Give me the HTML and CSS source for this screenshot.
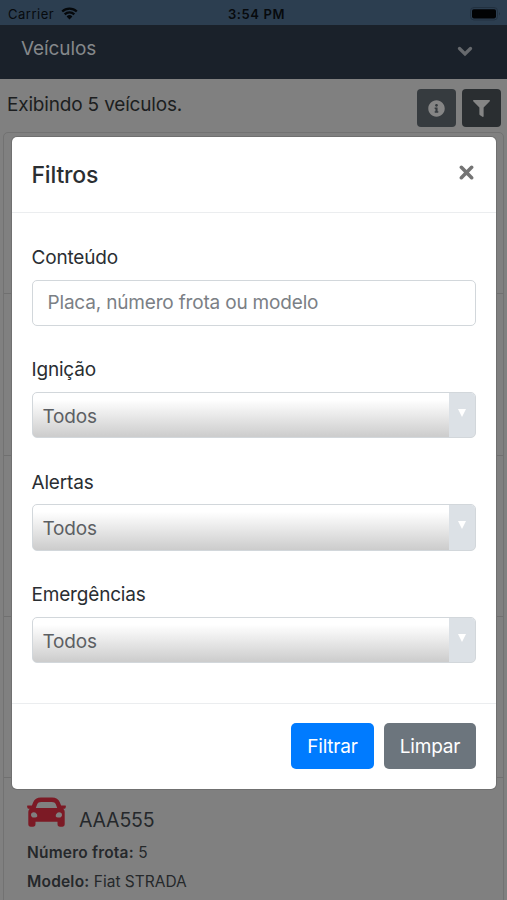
FILE: index.html
```html
<!DOCTYPE html>
<html lang="pt-BR">
<head>
<meta charset="utf-8">
<title>Veículos</title>
<link rel="stylesheet" href="styles.css">
</head>
<body>
<div class="app">
  <div class="status">
    <div class="carrier"><span class="carrier-name">Carrier</span>
      <svg class="wifi" viewBox="0 0 17 13"><path d="M1.2 4.5a10.6 10.6 0 0 1 14.6 0M3.7 7.3a6.9 6.9 0 0 1 9.6 0" fill="none" stroke="#05080b" stroke-width="2.3"/><path d="M5.6 9.4a4.2 4.2 0 0 1 5.8 0L8.500 12.500z" fill="#05080b"/></svg>
    </div>
    <div class="clock">3:54 PM</div>
    <div class="power">
      <svg class="battery" viewBox="0 0 31 14"><rect x=".5" y=".5" width="27" height="12.500" rx="3.500" fill="none" stroke="#223140"/><rect x="2" y="2.200" width="24" height="9.200" rx="1.800" fill="#020304"/><path d="M29 5q1.500 1.700 0 3.500z" fill="#1c2935"/></svg>
    </div>
  </div>
  <header class="navbar">
    <span class="brand">Veículos</span>
    <svg class="chevron" viewBox="0 0 16 11"><path d="M2.500 2.500 8 8l5.500-5.500" fill="none" stroke="#66696d" stroke-width="3.300" stroke-linecap="round"/></svg>
  </header>
  <div class="toolbar">
    <span class="summary">Exibindo 5 veículos.</span>
    <span class="tool"><svg class="tool-icon" viewBox="0 0 512 512"><path d="M256 8C119.043 8 8 119.083 8 256c0 136.997 111.043 248 248 248s248-111.003 248-248C504 119.083 392.957 8 256 8zm0 110c23.196 0 42 18.804 42 42s-18.804 42-42 42-42-18.804-42-42 18.804-42 42-42zm56 254c0 6.627-5.373 12-12 12h-88c-6.627 0-12-5.373-12-12v-24c0-6.627 5.373-12 12-12h12v-64h-12c-6.627 0-12-5.373-12-12v-24c0-6.627 5.373-12 12-12h64c6.627 0 12 5.373 12 12v100h12c6.627 0 12 5.373 12 12v24z"/></svg></span>
    <span class="tool tool-active"><svg class="tool-icon" viewBox="0 0 512 512"><path d="M487.976 0H24.028C2.710 0-8.047 25.866 7.058 40.971L192 225.941V432c0 7.831 3.821 15.170 10.237 19.662l80 55.980C298.020 518.690 320 507.493 320 487.980V225.941l184.947-184.970C520.021 25.896 509.338 0 487.976 0z"/></svg></span>
  </div>
  <div class="list">
    <div class="item"></div>
    <div class="item"></div>
    <div class="item"></div>
    <div class="item"></div>
    <div class="item">
      <div class="plate">
        <svg class="car" viewBox="0 0 39 30"><path fill-rule="evenodd" d="M14 .5h11c4 0 6.600 1.800 7.800 4.800l1.300 3.200h3.900c.7 0 1 .4.900 1l-.4 1.500c-.1.500-.5.700-1 .7h-1.300c1 .9 1.500 2.200 1.500 3.600V27c0 1.800-.9 2.700-2.500 2.700h-2.200c-1.600 0-2.500-.9-2.500-2.700v-2.300h-22V27c0 1.800-.9 2.700-2.500 2.700H3.800c-1.600 0-2.500-.9-2.500-2.700V15.300c0-1.400.5-2.700 1.500-3.600H1.500c-.5 0-.9-.2-1-.7L.1 9.500c-.1-.6.200-1 .9-1h3.900l1.300-3.200C7.400 2.300 10 .5 14 .5zM14.200 5c-2.200 0-3.300.7-4 2.300L8.800 11h21.400l-1.400-3.700C28.100 5.700 27 5 24.800 5zM6.800 15.300c-1.700 0-2.800 1.100-2.800 2.600s1.100 2.600 2.800 2.600c2 0 3.500-.4 3.500-1.600 0-1.600-1.500-3.600-3.500-3.600zm25.400 0c-2 0-3.500 2-3.500 3.600 0 1.200 1.500 1.600 3.500 1.600 1.700 0 2.800-1.100 2.800-2.600s-1.100-2.600-2.800-2.600z"/></svg>
        <span class="plate-number">AAA555</span>
      </div>
      <div class="detail"><b>Número frota:</b> 5</div>
      <div class="detail"><b>Modelo:</b> Fiat STRADA</div>
    </div>
  </div>
</div>
<div class="modal">
  <div class="modal-header">
    <span class="modal-title">Filtros</span>
    <svg class="close" viewBox="0 0 14 14"><path d="M2.200 2.200l9.600 9.600M11.800 2.200l-9.600 9.600" stroke="#747474" stroke-width="3.300" stroke-linecap="round"/></svg>
  </div>
  <div class="modal-body">
    <div class="group"><label class="label">Conteúdo</label><input class="input" placeholder="Placa, número frota ou modelo"></div>
    <div class="group"><label class="label">Ignição</label><div class="select"><span class="value">Todos</span><span class="handle"><i class="arrow"></i></span></div></div>
    <div class="group"><label class="label">Alertas</label><div class="select"><span class="value">Todos</span><span class="handle"><i class="arrow"></i></span></div></div>
    <div class="group"><label class="label">Emergências</label><div class="select"><span class="value">Todos</span><span class="handle"><i class="arrow"></i></span></div></div>
  </div>
  <div class="modal-footer">
    <button class="btn btn-primary">Filtrar</button>
    <button class="btn btn-secondary">Limpar</button>
  </div>
</div>
</body>
</html>
```
FILE: styles.css
```css
* { box-sizing: border-box; }
body {
  margin: 0;
  font-family: Inter, "Liberation Sans", sans-serif;
  font-size: 19px;
  letter-spacing: -0.18px;
  color: #2a2e32;
}
svg { display: block; flex: none; }
.app { height: 900px; overflow: hidden; background: #808080; }
.status {
  display: grid;
  grid-template-columns: 1fr auto 1fr;
  align-items: center;
  height: 25px;
  padding: 2px 6px 0 8px;
  background: #2c3e50;
  color: #070a0d;
  font-size: 13px;
}
.carrier { display: flex; align-items: center; gap: 7px; }
.carrier-name { letter-spacing: 0.5px; }
.wifi { width: 17px; height: 13px; }
.clock { padding-left: 4px; font-weight: 600; letter-spacing: 0.6px; }
.power { display: flex; justify-content: flex-end; }
.battery { width: 31px; height: 14px; }
.navbar {
  display: flex;
  justify-content: space-between;
  align-items: flex-start;
  height: 54px;
  padding: 11px 34px 0 21px;
  background: #1a212a;
  color: #85888b;
}
.brand { line-height: 26px; letter-spacing: -0.1px; }
.chevron { width: 16px; height: 11px; margin-top: 10px; }
.toolbar { display: flex; gap: 6px; height: 53px; padding: 10px 6px 0 7px; }
.summary { flex: 1; line-height: 31px; color: #1c1e20; }
.tool {
  display: flex;
  align-items: center;
  justify-content: center;
  width: 39px;
  height: 38px;
  border-radius: 4px;
  background: #363b3f;
}
.tool-active { background: #2a2e31; }
.tool-icon { width: 17px; height: 17px; fill: #858585; }
.list { margin: 0 3px; border: 1px solid #727272; border-radius: 5px; }
.item { height: 161.3px; padding: 19px 23px; border-bottom: 1px solid #707070; color: #25282b; }
.plate { display: flex; gap: 13px; height: 41px; }
.car { width: 39px; height: 30px; fill: #7c1a25; }
.plate-number { padding-top: 8px; line-height: 30px; font-size: 19.5px; }
.detail { height: 29px; line-height: 29px; font-size: 15.5px; letter-spacing: 0; }
.detail b { font-weight: 600; letter-spacing: 0.2px; }
.modal {
  position: absolute;
  left: 12px;
  top: 137px;
  width: 484px;
  height: 652px;
  border-radius: 5px;
  background: #fff;
  box-shadow: 0 0 0 1px #707070;
}
.modal-header {
  display: flex;
  justify-content: space-between;
  height: 76px;
  padding: 23px 22px 0 19.5px;
  border-bottom: 1px solid #ebedef;
}
.modal-title { font-size: 23px; line-height: 30px; font-weight: 500; letter-spacing: -0.2px; }
.close { width: 15px; height: 15px; margin-top: 5px; }
.modal-body { height: 490px; padding: 29px 20px 0 19.5px; }
.group { display: flex; flex-direction: column; height: 112.4px; }
.label { height: 37.5px; line-height: 31px; }
.input, .select {
  flex: none;
  width: 100%;
  height: 46.500px;
  border: 1px solid #d2d7db;
  border-radius: 5px;
}
.input { padding: 0 15px; font: inherit; letter-spacing: inherit; outline: none; background: #fff; }
.input::placeholder { color: #7b8085; opacity: 1; }
.select {
  display: flex;
  justify-content: space-between;
  overflow: hidden;
  padding-left: 10px;
  background: linear-gradient(#fff 15%, #ccc);
  color: #5c5f63;
}
.value { line-height: 47px; }
.handle { display: flex; justify-content: center; width: 26px; padding-top: 16px; background: #dce1e6; }
.arrow { width: 0; height: 0; border: 4.500px solid transparent; border-top: 8px solid #fff; border-bottom: 0; }
.modal-footer {
  display: flex;
  justify-content: flex-end;
  gap: 10px;
  padding: 19px 20px 0;
  border-top: 1px solid #ebedef;
}
.btn {
  height: 46px;
  padding: 0;
  border: 0;
  border-radius: 5px;
  color: #fff;
  font: inherit;
  letter-spacing: inherit;
}
.btn-primary { width: 83px; background: #007bff; }
.btn-secondary { width: 92px; background: #6c757d; }
```
